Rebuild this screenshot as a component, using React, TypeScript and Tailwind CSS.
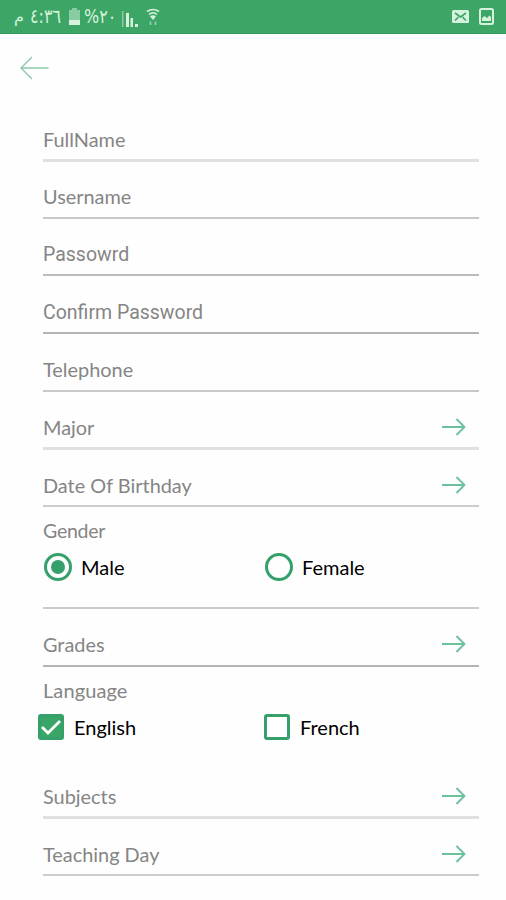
import { useState } from 'react';

interface FieldProps {
  label: string;
  className: string;
  font?: string;
  arrow?: boolean;
}

function Arrow() {
  return (
    <svg width="26" height="20" viewBox="0 0 26 20" fill="none" stroke="#6cc09c" strokeWidth="1.8" className="mr-3 mb-0.5">
      <path d="M1 10H23.5M15.5 2L23.5 10L15.5 18" />
    </svg>
  );
}

function Field({ label, className, font = 'text-[19.9px] font-[Lato,sans-serif]', arrow }: FieldProps) {
  return (
    <div className={`flex items-end justify-between ${className}`}>
      <span className={`leading-6 text-[#858585] ${font}`}>{label}</span>
      {arrow && <Arrow />}
    </div>
  );
}

function Radio({ label, checked, onClick }: { label: string; checked: boolean; onClick: () => void }) {
  return (
    <button onClick={onClick} className="flex w-[221px] shrink-0 items-center gap-[9px]">
      <span className="flex size-7 items-center justify-center rounded-full border-3 border-[#35a06a]">
        {checked && <span className="size-3.5 rounded-full bg-[#35a06a]" />}
      </span>
      <span className="text-[20px] leading-6 text-black">{label}</span>
    </button>
  );
}

function Checkbox({ label, checked, onClick }: { label: string; checked: boolean; onClick: () => void }) {
  return (
    <button onClick={onClick} className="flex w-[226px] shrink-0 items-center gap-[10px]">
      <span
        className={`flex size-[26px] items-center justify-center rounded-[3px] border-3 border-[#35a06a] ${
          checked ? 'bg-[#3aa566]' : 'bg-white'
        }`}
      >
        {checked && (
          <svg width="20" height="16" viewBox="0 0 20 16" fill="none" stroke="white" strokeWidth="2.8" className="shrink-0">
            <path d="M1 8L7 14L19 2" />
          </svg>
        )}
      </span>
      <span className="text-[20px] leading-6 text-black">{label}</span>
    </button>
  );
}

function StatusBar() {
  return (
    <div className="flex h-[34px] items-center justify-between border-b border-[#2f9a5b] bg-[#3da566] pr-3 pl-3.5 text-[#d5f3dc]">
      <div dir="ltr" className="flex items-center font-['DejaVu_Sans',sans-serif] text-[16px] leading-5">
        <span className="w-4">م</span>
        <span className="w-[39px] origin-left scale-y-125">٤:٣٦</span>
        <svg width="11" height="18" viewBox="0 0 11 18" fill="currentColor">
          <path d="M3 0h5v2h3v10H0V2h3z" opacity=".5" />
          <path d="M0 12h11v5H0z" />
        </svg>
        <span className="ml-1 w-[34px] origin-left scale-y-120">%٢٠</span>
        <svg width="16" height="16" viewBox="0 0 16 16" fill="currentColor" className="ml-1 mt-1">
          <path d="M0 0h1.5v16H0z" opacity=".5" />
          <path d="M4 2h3v14H4zM8.5 7h2.5v9H8.5zM13 13h3v3h-3z" />
        </svg>
        <svg width="14" height="18" viewBox="0 0 14 18" fill="none" stroke="currentColor" strokeWidth="1.6" className="ml-2">
          <path d="M1 3.5Q7-.5 13 3.5M3 6.5Q7 3 11 6.5" />
          <path d="M4 8.5Q7 6 10 8.5L7 12Z" fill="currentColor" stroke="none" />
          <path d="M4.5 13.5V17M9.5 13.5V17" opacity=".6" />
        </svg>
      </div>
      <div className="flex items-center gap-2.5">
        <svg width="17" height="13" viewBox="0 0 17 13">
          <rect width="17" height="13" rx="1.5" fill="currentColor" />
          <path d="M3 3L8.5 7L14 3M3 10.5L6.5 7M14 10.5L10.5 7" fill="none" stroke="#3da566" strokeWidth="1.6" />
        </svg>
        <svg width="15" height="17" viewBox="0 0 15 17">
          <rect x="1" y="1" width="13" height="15" rx="1.5" fill="none" stroke="currentColor" strokeWidth="2" />
          <path d="M3 13V10L5.5 8L8 10L10.5 7.5L12 9V13Z" fill="currentColor" />
        </svg>
      </div>
    </div>
  );
}

export default function App() {
  const [gender, setGender] = useState('Male');
  const [languages, setLanguages] = useState<string[]>(['English']);

  const toggleLanguage = (name: string) => {
    setLanguages(languages.includes(name) ? languages.filter((l) => l !== name) : [...languages, name]);
  };

  return (
    <div className="h-[900px] w-[506px] overflow-hidden bg-[#fefefe] font-[Lato,sans-serif]">
      <StatusBar />
      <div className="flex h-[68px] items-center pl-5">
        <svg width="29" height="24" viewBox="0 0 29 24" fill="none" stroke="#8cc9ad" strokeWidth="1.4">
          <path d="M28.5 12H1M12 1L1 12L12 23" />
        </svg>
      </div>

      <div className="ml-[43px] w-[436px]">
        <Field label="FullName" className="h-[60px] border-b-3 border-[#e0e0e0] pb-2" />
        <Field label="Username" className="h-[57px] border-b-2 border-[#c8c8c8] pb-[9px]" />
        <Field
          label="Passowrd"
          font="text-[19.5px] font-[Roboto,sans-serif]"
          className="h-[57px] border-b-2 border-[#bcbcbc] pb-[7px]"
        />
        <Field
          label="Confirm Password"
          font="text-[19.5px] font-[Roboto,sans-serif]"
          className="h-[58px] border-b-2 border-[#b4b4b4] pb-[7px]"
        />
        <Field label="Telephone" className="h-[58px] border-b-2 border-[#c8c8c8] pb-[9px]" />
        <Field label="Major" arrow className="h-[58px] border-b-3 border-[#e0e0e0] pb-2" />
        <Field label="Date Of Birthday" arrow className="h-[57px] border-b-2 border-[#cccccc] pb-2" />

        <div className="h-[102px] border-b-2 border-[#cccccc] pt-3">
          <div className="text-[19.5px] leading-6 tracking-[-0.25px] text-[#858585]">Gender</div>
          <div className="mt-2.5 ml-px flex">
            <Radio label="Male" checked={gender === 'Male'} onClick={() => setGender('Male')} />
            <Radio label="Female" checked={gender === 'Female'} onClick={() => setGender('Female')} />
          </div>
        </div>

        <Field label="Grades" arrow className="h-[58px] border-b-2 border-[#b4b4b4] pb-[9px]" />

        <div className="h-[94px] pt-[11px]">
          <div className="text-[20px] leading-6 tracking-[0.1px] text-[#858585]">Language</div>
          <div className="mt-3 -ml-[5px] flex">
            <Checkbox label="English" checked={languages.includes('English')} onClick={() => toggleLanguage('English')} />
            <Checkbox label="French" checked={languages.includes('French')} onClick={() => toggleLanguage('French')} />
          </div>
        </div>

        <Field label="Subjects" arrow className="h-[58px] border-b-3 border-[#e0e0e0] pb-2" />
        <Field label="Teaching Day" arrow className="h-[57px] border-b-2 border-[#cccccc] pb-2" />
      </div>
    </div>
  );
}
